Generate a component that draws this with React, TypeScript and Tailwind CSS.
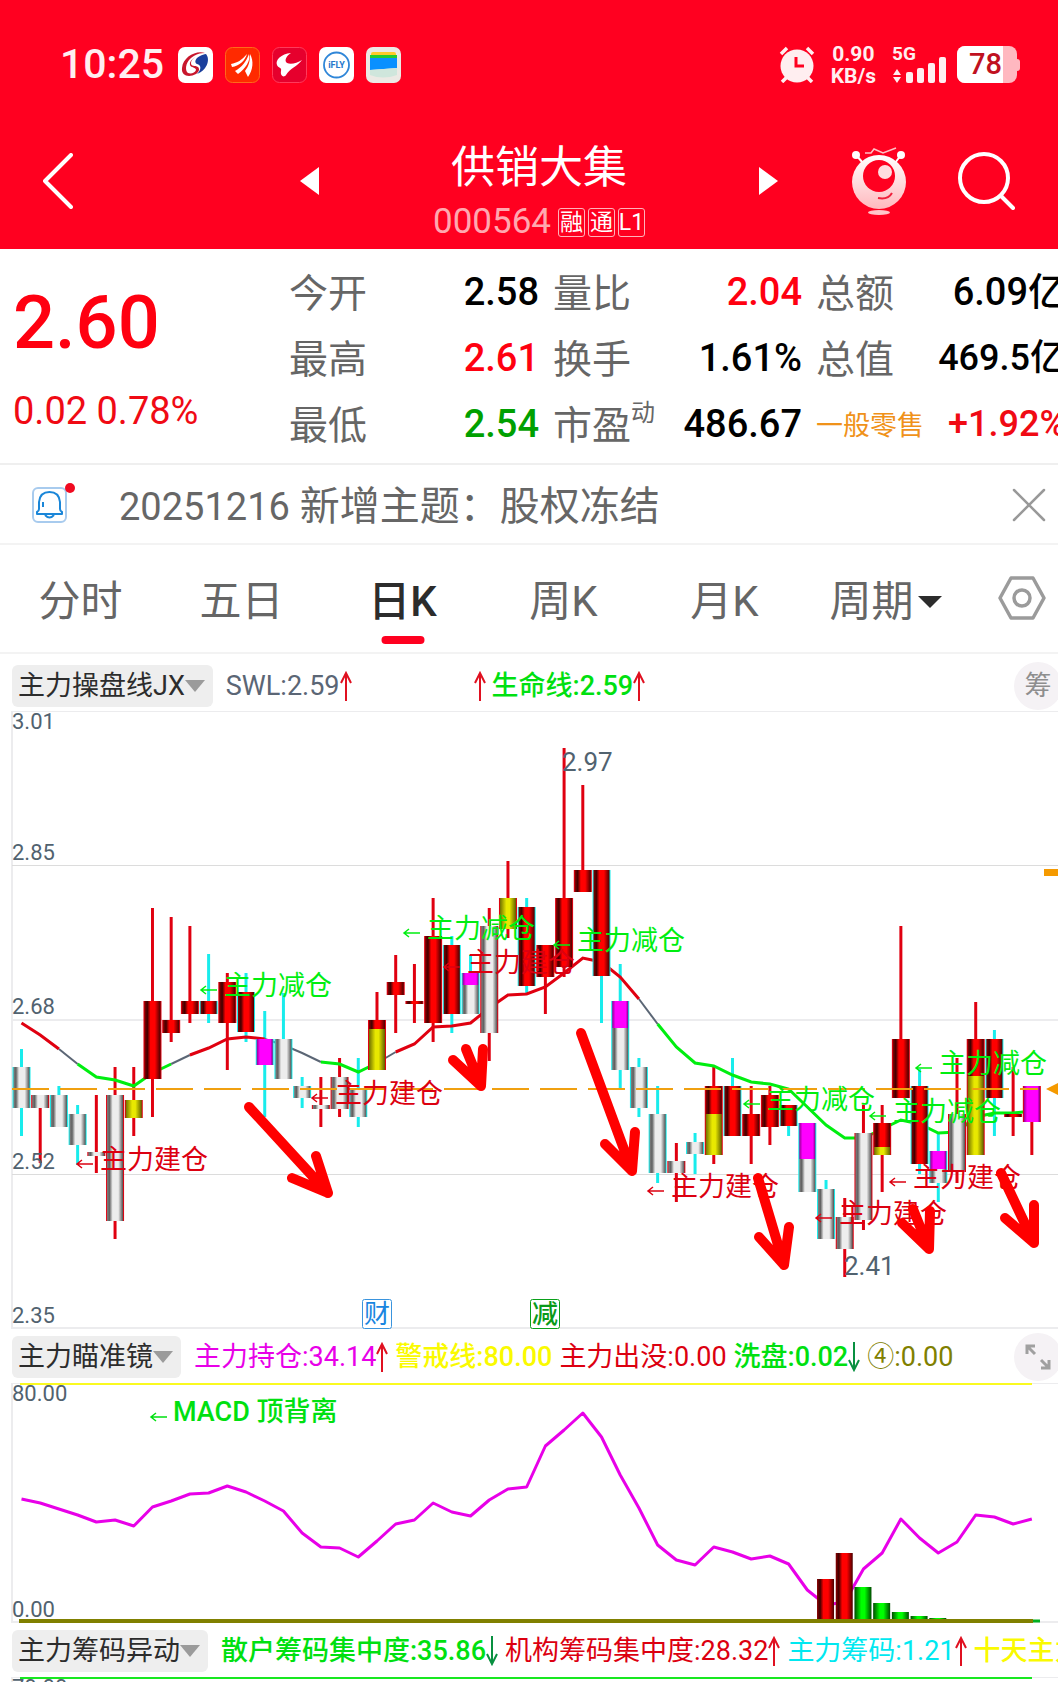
import type { ReactNode } from "react";
import { clsx } from "clsx";

type Fill = "red" | "silver" | "yellow" | "magenta" | "green";

interface Candle {
  wick: "up" | "down";
  fill: Fill;
  // high, body top, body bottom, low in plot units
  y: [number, number, number, number];
  // second colour that starts at `split` and runs down to the body bottom
  lower?: Fill;
  split?: number;
}

interface Readout {
  label: string;
  color: string;
  trend?: "up" | "down";
  lead?: "up";
  className?: string;
}

const STEP = 18.71;
const xAt = (i: number) => 21.5 + i * STEP;

const WICK_COLORS = { up: "#e00010", down: "#18ecec" };

const candles: Candle[] = [
  { wick: "down", fill: "silver", y: [338, 356, 397, 425] },
  { wick: "up", fill: "silver", y: [384, 384, 397, 452] },
  { wick: "down", fill: "silver", y: [375, 384, 416, 416] },
  { wick: "down", fill: "silver", y: [394, 403, 434, 454] },
  { wick: "up", fill: "silver", y: [384, 441, 445, 462] },
  { wick: "up", fill: "silver", y: [356, 384, 510, 528] },
  { wick: "up", fill: "yellow", y: [356, 389, 407, 425] },
  { wick: "up", fill: "red", y: [197, 290, 368, 406] },
  { wick: "up", fill: "red", y: [206, 309, 322, 331] },
  { wick: "up", fill: "red", y: [215, 290, 303, 312] },
  { wick: "down", fill: "red", y: [243, 290, 303, 312] },
  { wick: "up", fill: "red", y: [262, 271, 312, 359] },
  { wick: "down", fill: "red", y: [262, 281, 321, 331] },
  { wick: "down", fill: "magenta", y: [300, 328, 354, 406] },
  { wick: "down", fill: "silver", y: [282, 328, 368, 368] },
  { wick: "down", fill: "silver", y: [366, 375, 387, 397] },
  { wick: "up", fill: "silver", y: [366, 394, 398, 416] },
  { wick: "up", fill: "silver", y: [347, 366, 398, 406] },
  { wick: "down", fill: "silver", y: [347, 378, 406, 416] },
  { wick: "up", fill: "red", y: [281, 309, 359, 359], lower: "yellow", split: 318 },
  { wick: "up", fill: "red", y: [244, 271, 284, 322] },
  { wick: "up", fill: "red", y: [253, 290, 293, 312] },
  { wick: "up", fill: "red", y: [187, 225, 312, 331] },
  { wick: "down", fill: "red", y: [225, 234, 303, 322] },
  { wick: "down", fill: "magenta", y: [244, 262, 303, 303], lower: "silver", split: 274 },
  { wick: "up", fill: "silver", y: [197, 215, 322, 350] },
  { wick: "up", fill: "yellow", y: [150, 187, 218, 227] },
  { wick: "down", fill: "red", y: [187, 196, 275, 284] },
  { wick: "up", fill: "red", y: [234, 234, 266, 303] },
  { wick: "up", fill: "red", y: [37, 187, 256, 266] },
  { wick: "up", fill: "red", y: [74, 159, 181, 181] },
  { wick: "down", fill: "red", y: [159, 159, 265, 312] },
  { wick: "down", fill: "magenta", y: [253, 290, 359, 377], lower: "silver", split: 317 },
  { wick: "down", fill: "silver", y: [347, 356, 397, 406] },
  { wick: "down", fill: "silver", y: [375, 403, 462, 472] },
  { wick: "up", fill: "silver", y: [432, 450, 462, 491] },
  { wick: "down", fill: "silver", y: [422, 431, 443, 463] },
  { wick: "up", fill: "red", y: [356, 375, 444, 453], lower: "yellow", split: 403 },
  { wick: "down", fill: "red", y: [347, 375, 425, 425] },
  { wick: "up", fill: "red", y: [375, 403, 425, 453] },
  { wick: "up", fill: "red", y: [375, 384, 416, 434] },
  { wick: "down", fill: "red", y: [394, 394, 415, 425] },
  { wick: "down", fill: "magenta", y: [412, 412, 481, 481], lower: "silver", split: 448 },
  { wick: "down", fill: "silver", y: [469, 478, 528, 528] },
  { wick: "up", fill: "silver", y: [487, 506, 538, 566] },
  { wick: "up", fill: "silver", y: [394, 422, 509, 519] },
  { wick: "up", fill: "red", y: [394, 412, 444, 481], lower: "yellow", split: 436 },
  { wick: "up", fill: "red", y: [215, 328, 387, 387] },
  { wick: "down", fill: "red", y: [358, 375, 453, 463] },
  { wick: "down", fill: "magenta", y: [422, 440, 472, 491], lower: "silver", split: 458 },
  { wick: "up", fill: "silver", y: [347, 403, 461, 472] },
  { wick: "up", fill: "red", y: [291, 328, 444, 444], lower: "yellow", split: 365 },
  { wick: "down", fill: "red", y: [319, 328, 387, 425] },
  { wick: "up", fill: "red", y: [356, 403, 406, 425] },
  { wick: "up", fill: "magenta", y: [375, 375, 411, 444] },
];

const lifeLine = [
  312, 324, 338, 353, 366, 369, 375, 362, 353, 344, 337, 328, 326, 328, 334, 342, 351, 353, 361, 352,
  341, 333, 316, 315, 312, 297, 284, 283, 276, 262, 247, 251, 266, 288, 313, 336, 352, 355, 364, 371,
  373, 378, 396, 414, 427, 427, 418, 409, 413, 422, 421, 406, 402, 402, 400,
];

// [from, to, colour, width]
const lifeSegments: [number, number, string, number][] = [
  [0, 2, "#e00010", 3],
  [2, 3, "#5b6675", 2],
  [3, 8, "#00ee10", 3],
  [8, 9, "#5b6675", 2],
  [9, 13, "#e00010", 3],
  [13, 16, "#5b6675", 2],
  [16, 19, "#00ee10", 3],
  [19, 20, "#5b6675", 2],
  [20, 33, "#e00010", 3],
  [33, 34, "#5b6675", 2],
  [34, 54, "#00ee10", 3],
];

const signals = [
  { x: 201, y: 279, kind: "sell" },
  { x: 77, y: 453, kind: "buy" },
  { x: 312, y: 387, kind: "buy" },
  { x: 404, y: 222, kind: "sell" },
  { x: 444, y: 256, kind: "buy" },
  { x: 554, y: 234, kind: "sell" },
  { x: 648, y: 480, kind: "buy" },
  { x: 744, y: 393, kind: "sell" },
  { x: 870, y: 405, kind: "sell" },
  { x: 916, y: 357, kind: "sell" },
  { x: 890, y: 471, kind: "buy" },
  { x: 816, y: 507, kind: "buy" },
];

const handArrows = [
  "M249 396L328 482M316 445L328 482L292 467",
  "M466 338L481 375M453 349L481 375L483 338",
  "M581 322L632 460M635 421L632 460L605 433",
  "M758 467L784 554M789 516L784 554L759 526",
  "M913 498L929 538M930 500L929 538L902 512",
  "M1001 462L1034 532M1034 494L1034 532L1005 507",
];

const holdings = [
  116, 120, 126, 132, 139, 137, 143, 124, 118, 111, 110, 103, 109, 118, 128, 150, 164, 165, 174, 158,
  141, 137, 120, 129, 133, 117, 106, 104, 63, 47, 30, 54, 92, 125, 162, 177, 182, 164, 169, 176,
  173, 181, 207, 222, 219, 186, 170, 136, 155, 170, 159, 132, 134, 141, 136,
];

const volumeBars: { i: number; top: number; fill: Fill }[] = [
  { i: 43, top: 196, fill: "red" },
  { i: 44, top: 170, fill: "red" },
  { i: 45, top: 204, fill: "green" },
  { i: 46, top: 220, fill: "green" },
  { i: 47, top: 229, fill: "green" },
  { i: 48, top: 233, fill: "green" },
  { i: 49, top: 235, fill: "green" },
  { i: 50, top: 236, fill: "green" },
  { i: 51, top: 236, fill: "green" },
];

const tabs = ["分时", "五日", "日K", "周K", "月K"];

const points = (ys: number[], from = 0) => ys.map((y, k) => `${xAt(from + k)},${y}`).join(" ");

function Gradients() {
  return (
    <defs>
      <linearGradient id="fill-red">
        <stop offset="0" stopColor="#8a0000" />
        <stop offset="0.18" stopColor="#400000" />
        <stop offset="0.38" stopColor="#ff0000" />
        <stop offset="0.65" stopColor="#ff0000" />
        <stop offset="1" stopColor="#4a0000" />
      </linearGradient>
      <linearGradient id="fill-silver">
        <stop offset="0" stopColor="#808080" />
        <stop offset="0.15" stopColor="#606060" />
        <stop offset="0.35" stopColor="#ededed" />
        <stop offset="0.7" stopColor="#ededed" />
        <stop offset="1" stopColor="#505050" />
      </linearGradient>
      <linearGradient id="fill-yellow">
        <stop offset="0" stopColor="#707000" />
        <stop offset="0.4" stopColor="#e8e800" />
        <stop offset="0.6" stopColor="#e8e800" />
        <stop offset="1" stopColor="#606000" />
      </linearGradient>
      <linearGradient id="fill-magenta">
        <stop offset="0" stopColor="#900090" />
        <stop offset="0.2" stopColor="#ff00ff" />
        <stop offset="0.85" stopColor="#ff00ff" />
        <stop offset="1" stopColor="#800080" />
      </linearGradient>
      <linearGradient id="fill-green">
        <stop offset="0" stopColor="#004a00" />
        <stop offset="0.4" stopColor="#00ff00" />
        <stop offset="0.6" stopColor="#00ff00" />
        <stop offset="1" stopColor="#004a00" />
      </linearGradient>
    </defs>
  );
}

function CandleBody({ candle, index }: { candle: Candle; index: number }) {
  const x = xAt(index);
  const [, top, bottom] = candle.y;
  const end = candle.lower ? candle.split! : bottom;
  return (
    <g>
      <rect x={x - 9} y={top} width={18} height={bottom - top} fill={WICK_COLORS[candle.wick]} />
      <rect x={x - 8} y={top} width={16} height={end - top} fill={`url(#fill-${candle.fill})`} />
      {candle.lower && (
        <rect x={x - 8} y={end} width={16} height={bottom - end} fill={`url(#fill-${candle.lower})`} />
      )}
    </g>
  );
}

function LeftTick({ x, y, color }: { x: number; y: number; color: string }) {
  return <path d={`M${x + 16} ${y}H${x}M${x + 5} ${y - 4}L${x} ${y}L${x + 5} ${y + 4}`} stroke={color} strokeWidth="1.5" fill="none" />;
}

function PriceChart() {
  return (
    <svg viewBox="0 0 1058 618" className="block h-auto w-full" role="img" aria-label="日K">
      <Gradients />
      <path d="M12 0H1058M12 309H1058M12 617H1058M12 0V618" stroke="#ececee" strokeWidth="2" />
      <path d="M12 154.5H1058M12 463.5H1058" stroke="#dcdcdc" strokeWidth="1" />

      {candles.map((c, i) => (
        <line key={i} x1={xAt(i)} x2={xAt(i)} y1={c.y[0]} y2={c.y[3]} stroke={WICK_COLORS[c.wick]} strokeWidth="3" />
      ))}
      {lifeSegments.map(([from, to, color, width]) => (
        <polyline
          key={from}
          points={points(lifeLine.slice(from, to + 1), from)}
          fill="none"
          stroke={color}
          strokeWidth={width}
        />
      ))}
      {candles.map((c, i) => (
        <CandleBody key={i} candle={c} index={i} />
      ))}

      {/* last price */}
      <line x1="12" x2="1038" y1="378" y2="378" stroke="#f0a010" strokeWidth="2" strokeDasharray="37 11" />
      <path d="M1046 378L1058 372V384Z" fill="#f59a00" />
      <rect x="1044" y="158" width="14" height="7" fill="#f59a00" />

      {signals.map((s) => {
        const color = s.kind === "sell" ? "#00ee10" : "#dc0010";
        return (
          <g key={`${s.x}-${s.y}`}>
            <LeftTick x={s.x} y={s.y} color={color} />
            <text x={s.x + 23} y={s.y + 5} fontSize="27" fill={color}>
              {s.kind === "sell" ? "主力减仓" : "主力建仓"}
            </text>
          </g>
        );
      })}

      <g fontSize="22" fill="#51626f">
        <text x="12" y="18">3.01</text>
        <text x="12" y="149">2.85</text>
        <text x="12" y="303">2.68</text>
        <text x="12" y="458">2.52</text>
        <text x="12" y="612">2.35</text>
      </g>
      <g fontSize="26" fill="#51626f">
        <text x="562" y="60">2.97</text>
        <text x="844" y="564">2.41</text>
      </g>

      {handArrows.map((d) => (
        <path key={d} d={d} fill="none" stroke="#ff0000" strokeWidth="10" strokeLinecap="round" strokeLinejoin="round" />
      ))}

      <rect x="362.5" y="588.5" width="29" height="29" rx="2" fill="#fff" stroke="#3a94dd" />
      <text x="377" y="612" fontSize="26" textAnchor="middle" fill="#1a86e0">财</text>
      <rect x="530.5" y="588.5" width="29" height="29" rx="2" fill="#fff" stroke="#0aa01a" />
      <text x="545" y="612" fontSize="26" fontWeight="500" textAnchor="middle" fill="#0a9a1a">减</text>
    </svg>
  );
}

function HoldingChart() {
  return (
    <svg viewBox="0 0 1058 240" className="block h-auto w-full" role="img" aria-label="主力瞄准镜">
      <path d="M12 0H1058M12 239H1058M12 0V240" stroke="#ececee" strokeWidth="2" />
      <line x1="20" x2="1032" y1="1" y2="1" stroke="#fafa20" strokeWidth="2" />
      <polyline points={points(holdings)} fill="none" stroke="#e800e8" strokeWidth="3" strokeLinejoin="round" />
      {volumeBars.map((b) => (
        <rect key={b.i} x={xAt(b.i) - 9} y={b.top} width={17} height={238 - b.top} fill={`url(#fill-${b.fill})`} />
      ))}
      <line x1="19" x2="1033" y1="238" y2="238" stroke="#808000" strokeWidth="4" />
      <line x1="1033" x2="1040" y1="238" y2="238" stroke="#00b020" strokeWidth="3" />
      <LeftTick x={151} y={34} color="#00e010" />
      <text x="173" y="38" fontSize="27" fontWeight="500" fill="#00e010">MACD 顶背离</text>
      <g fontSize="22" fill="#51626f">
        <text x="12" y="18">80.00</text>
        <text x="12" y="234">0.00</text>
      </g>
    </svg>
  );
}

function TrendArrow({ dir }: { dir: "up" | "down" }) {
  return (
    <svg
      viewBox="0 0 12 30"
      className={clsx("h-[30px] w-3 shrink-0", dir === "up" ? "text-[#e01020]" : "rotate-180 text-[#089040]")}
      fill="none"
      stroke="currentColor"
      strokeWidth="2"
    >
      <path d="M6 30V2M1 12L6 2L11 12" />
    </svg>
  );
}

function IndicatorBar({ name, items, children, className }: { name: string; items: Readout[]; children?: ReactNode; className?: string }) {
  return (
    <div className={clsx("flex items-center overflow-hidden pb-1 pl-3 text-[27px] leading-[42px] whitespace-nowrap", className)}>
      <button type="button" className="flex shrink-0 items-center rounded-md bg-[#eeeeee] pr-2 pl-[6px] text-[#2c2c2c]">
        {name}
        <svg viewBox="0 0 20 12" className="h-3 w-5" fill="#9b9b9b">
          <path d="M0 0H20L10 12Z" />
        </svg>
      </button>
      <div className="ml-[13px] flex min-w-0 flex-1 gap-[7px]">
        {items.map((item) => (
          <span key={item.label} className={clsx("flex shrink-0 items-center", item.color, item.className)}>
            {item.lead && (
              <span className="mr-[6px]">
                <TrendArrow dir={item.lead} />
              </span>
            )}
            {item.label}
            {item.trend && <TrendArrow dir={item.trend} />}
          </span>
        ))}
      </div>
      {children}
    </div>
  );
}

interface StatProps {
  label: string;
  sup?: string;
  value: string;
  color?: string;
  size?: string;
  className?: string;
}

function Stat({ label, sup, value, color = "text-black", size = "text-[38px]", className }: StatProps) {
  return (
    <div className={clsx("flex h-[66px] items-center justify-between whitespace-nowrap", className)}>
      <dt className="flex items-start text-[39px] text-[#666666]">
        {label}
        {sup && <sup className="top-0 text-2xl leading-8">{sup}</sup>}
      </dt>
      <dd className={clsx("pb-1 font-medium", size, color)}>{value}</dd>
    </div>
  );
}

function StatusBar() {
  return (
    <div className="flex h-[37px] items-center justify-between pr-[38px] pl-[60px]">
      <div className="flex items-center">
        <span className="mr-[14px] text-[41px] leading-none font-medium text-[#ffeef0]">10:25</span>
        <div className="flex gap-3">
          <svg viewBox="0 0 35 36" className="h-9 w-[35px]">
            <rect width="35" height="36" rx="7" fill="#fff" />
            <path d="M27 6C18 3 5 10 4 21C3 29 11 31 18 27C21 25 22 22 20 20C17 18 13 20 13 16C13 11 21 7 27 6Z" fill="#c8162c" />
            <path d="M28 7C33 13 28 24 19 27C24 22 23 18 19 17C16 16 17 12 22 10C17 9 11 14 12 18C13 21 18 20 18 23C17 26 13 27 10 26C7 24 7 16 13 11C18 7 24 5 28 7Z" fill="#fff" />
            <path d="M28 7C33 13 28 24 19 27C24 22 23 18 19 17C16 16 17 11 22 9C24 8 26 7 28 7Z" fill="#1b3f9c" />
          </svg>
          <svg viewBox="0 0 35 36" className="h-9 w-[35px]">
            <rect x="0.5" y="0.5" width="34" height="35" rx="7" fill="#ff2a00" stroke="#ff6a1a" />
            <path d="M6 17C12 16 17 13 22 7C20 14 14 19 7 20ZM10 24C17 20 21 15 24 7C26 14 20 22 13 27ZM20 24C24 19 25 14 25 7C29 14 28 23 23 30Z" fill="#fff" />
          </svg>
          <svg viewBox="0 0 35 36" className="h-9 w-[35px]">
            <rect x="0.5" y="0.5" width="34" height="35" rx="7" fill="#e6002d" stroke="#ff3b5c" />
            <path d="M19 6C9 7 3 13 5 18C6 21 10 20 9 24C8 29 12 31 14 28C18 21 25 20 30 13C25 16 19 18 15 16C12 14 14 9 19 6Z" fill="#fff" />
          </svg>
          <svg viewBox="0 0 35 36" className="h-9 w-[35px]">
            <rect width="35" height="36" rx="7" fill="#fff" />
            <circle cx="17.5" cy="18" r="12.5" fill="none" stroke="#2f86d8" strokeWidth="1.8" />
            <text x="17.5" y="21" fontSize="9" fontWeight="700" textAnchor="middle" fill="#2478cc">iFLY</text>
          </svg>
          <svg viewBox="0 0 35 36" className="h-9 w-[35px]">
            <rect width="35" height="36" rx="7" fill="#ece9e4" />
            <rect x="5" y="5" width="25" height="10" rx="2" fill="#ffc928" />
            <rect x="4" y="8" width="27" height="10" fill="#22cc2e" />
            <path d="M4 11H31V21L18 22L4 23Z" fill="#0a90ff" />
            <path d="M4 23L31 21V28Q17 33 4 28Z" fill="#cfe6dc" />
          </svg>
        </div>
      </div>

      <div className="flex items-center text-[#ffeef0]">
        <svg viewBox="0 0 36 37" className="h-[37px] w-9" fill="none" stroke="currentColor">
          <circle cx="18" cy="20" r="16.5" fill="currentColor" stroke="none" />
          <path d="M2 8L8 2M28 2L34 8" strokeWidth="3.5" />
          <path d="M8 31L3 36M28 31L33 36" strokeWidth="3.5" />
          <path d="M17 11V20H25" stroke="#ff0020" strokeWidth="3" />
        </svg>
        <div className="ml-4 text-center text-[21px] leading-[22px] font-bold">
          <div>0.90</div>
          <div>KB/s</div>
        </div>
        <svg viewBox="0 0 55 37" className="ml-4 h-[37px] w-[55px]" fill="currentColor">
          <text x="0" y="14" fontSize="19" fontWeight="700">5G</text>
          <path d="M1 29L5 23L9 29ZM1 31L5 37L9 31Z" />
          <rect x="14" y="26" width="7" height="11" rx="2" />
          <rect x="25" y="22" width="7" height="15" rx="2" />
          <rect x="36" y="17" width="7" height="20" rx="2" />
          <rect x="47" y="11" width="7" height="26" rx="2" />
        </svg>
        <div className="ml-[10px] flex items-center">
          <div className="flex h-[37px] w-[60px] overflow-hidden rounded-lg bg-[#ffb8c0]">
            <div className="w-[46px] bg-white pr-px text-right text-[29px] leading-[37px] font-medium text-[#c01020]">78</div>
          </div>
          <div className="h-3 w-[3px] rounded-r-sm bg-[#ffb8c0]" />
        </div>
      </div>
    </div>
  );
}

function TitleBar() {
  return (
    <div className="mt-[31px] flex h-[135px] items-center px-[43px] pb-px text-white">
      <button type="button" aria-label="返回">
        <svg viewBox="0 0 30 56" className="h-14 w-[30px]" fill="none" stroke="currentColor" strokeWidth="4" strokeLinecap="round" strokeLinejoin="round">
          <path d="M28 2L2 28L28 54" />
        </svg>
      </button>
      <div className="ml-auto flex w-[478px] items-center justify-between">
        <button type="button" aria-label="上一只">
          <svg viewBox="0 0 19 28" className="h-7 w-[19px]" fill="currentColor">
            <path d="M19 0V28L0 14Z" />
          </svg>
        </button>
        <div className="mt-6 flex flex-col items-center">
          <h1 className="text-[44px] leading-[58px]">供销大集</h1>
          <div className="flex h-[50px] items-center gap-[3px]">
            <span className="mr-1 text-[35px] text-[#ffa8b0]">000564</span>
            {["融", "通", "L1"].map((tag) => (
              <span key={tag} className="flex h-[29px] w-[27px] items-center justify-center rounded-[3px] border border-[#ffb3bb] text-[23px] leading-none">
                {tag}
              </span>
            ))}
          </div>
        </div>
        <button type="button" aria-label="下一只">
          <svg viewBox="0 0 19 28" className="h-7 w-[19px]" fill="currentColor">
            <path d="M0 0V28L19 14Z" />
          </svg>
        </button>
      </div>
      <button type="button" aria-label="助手" className="ml-[73px]">
        <svg viewBox="0 0 56 68" className="h-[68px] w-14">
          <defs>
            <linearGradient id="robot" x2="0" y2="1">
              <stop offset="0" stopColor="#fff" />
              <stop offset="1" stopColor="#ffb9be" />
            </linearGradient>
          </defs>
          <path d="M14 6L20 6L23 2L32 6L45 1" fill="none" stroke="#ffc0c5" strokeWidth="1.5" />
          <path d="M5 8L12 16M50 8L44 16" stroke="#fff" strokeWidth="2" />
          <circle cx="5" cy="8" r="4" fill="#fff" />
          <circle cx="50" cy="8" r="4" fill="#fff" />
          <circle cx="28" cy="35" r="27" fill="url(#robot)" />
          <circle cx="28" cy="29" r="16" fill="#ff0020" />
          <circle cx="34" cy="25" r="7" fill="#ffdde0" />
          <path d="M27 51Q37 53 41 46" fill="none" stroke="#f0203c" strokeWidth="2" />
          <ellipse cx="28" cy="65.5" rx="11" ry="2.5" fill="#ffc5c9" />
        </svg>
      </button>
      <button type="button" aria-label="搜索" className="ml-[51px]">
        <svg viewBox="0 0 57 58" className="h-[58px] w-[57px]" fill="none" stroke="currentColor" strokeWidth="4" strokeLinecap="round">
          <circle cx="26" cy="26" r="24" />
          <path d="M43 44L55 56" />
        </svg>
      </button>
    </div>
  );
}

export default function App() {
  return (
    <div className="h-screen overflow-hidden bg-white [font-family:Roboto,'Noto_Sans_CJK_SC',sans-serif]">
      <header className="bg-[#ff0020] pt-[46px]">
        <StatusBar />
        <TitleBar />
      </header>

      <section className="grid grid-cols-[275fr_250fr_249fr_242fr] gap-x-[14px] border-b-2 border-[#efefef] pt-3 pb-1">
        <div className="pl-[13px] whitespace-nowrap text-[#f00a14]">
          <div className="mt-6 text-[74px] leading-[76px] font-medium text-[#ff0010]">2.60</div>
          <div className="mt-7 text-[38px] leading-[44px]">0.02 0.78%</div>
        </div>
        <dl>
          <Stat label="今开" value="2.58" />
          <Stat label="最高" value="2.61" color="text-[#ff0010]" />
          <Stat label="最低" value="2.54" color="text-[#00a000]" />
        </dl>
        <dl>
          <Stat label="量比" value="2.04" color="text-[#ff0010]" />
          <Stat label="换手" value="1.61%" />
          <Stat label="市盈" sup="动" value="486.67" />
        </dl>
        <dl className="overflow-hidden">
          <Stat label="总额" value="6.09亿" className="-mr-2" />
          <Stat label="总值" value="469.5亿" size="text-[36px]" className="-mr-2" />
          <div className="-mr-2 flex h-[66px] items-center justify-between whitespace-nowrap">
            <dt className="text-[27px] text-[#f0921a]">一般零售</dt>
            <dd className="pb-1 text-[36px] font-medium text-[#f00a14]">+1.92%</dd>
          </div>
        </dl>
      </section>

      <section className="flex h-[80px] items-center border-b-2 border-[#f3f3f3] pt-[2px] pr-3 pl-8">
        <div className="relative">
          <svg viewBox="0 0 35 36" className="h-9 w-[35px]" fill="none" stroke="#1a86d8" strokeWidth="2">
            <rect x="1" y="1" width="33" height="34" rx="5" stroke="#a8cbee" />
            <path d="M7 22V15Q8 5 17.500 5Q27 5 28 15V22Q28 24 30 25V27H5V25Q7 24 7 22Z" strokeLinejoin="round" />
            <path d="M13 28Q17.500 33 22 28M11 15V20" />
          </svg>
          <span className="absolute -top-1 -right-2 size-[10px] rounded-full bg-[#f00a20]" />
        </div>
        <p className="ml-[52px] flex-1 pt-1 text-[40px] whitespace-nowrap text-[#666666]">
          <span className="text-[38px]">20251216</span> 新增主题：股权冻结
        </p>
        <button type="button" aria-label="关闭">
          <svg viewBox="0 0 34 34" className="size-[34px]" stroke="#999" strokeWidth="2.5" strokeLinecap="round">
            <path d="M2 2L32 32M32 2L2 32" />
          </svg>
        </button>
      </section>

      <nav className="flex h-[109px] border-b-2 border-[#f3f3f3] pt-[7px] text-[42px] leading-[100px] text-[#666666]">
        {tabs.map((tab) => {
          const active = tab === "日K";
          return (
            <button
              key={tab}
              type="button"
              className={clsx("relative flex-[161]", active && "font-medium text-[#2c2c2c]")}
            >
              {tab}
              {active && <span className="absolute bottom-2 left-1/2 h-2 w-[43px] -translate-x-1/2 rounded-full bg-[#ff0020]" />}
            </button>
          );
        })}
        <button type="button" className="flex flex-[161] items-center justify-center gap-1">
          周期
          <svg viewBox="0 0 24 12" className="h-3 w-6" fill="#2c2c2c">
            <path d="M0 0H24L12 12Z" />
          </svg>
        </button>
        <button type="button" aria-label="设置" className="flex flex-[72] items-center justify-center pb-2 pl-5">
          <svg viewBox="0 0 48 44" className="h-11 w-12 shrink-0" fill="none" stroke="#9b9b9b" strokeWidth="3.5" strokeLinejoin="round">
            <path d="M13 2H35L46 22L35 42H13L2 22Z" />
            <circle cx="24" cy="22" r="8" />
          </svg>
        </button>
      </nav>

      <IndicatorBar
        name="主力操盘线JX"
        className="h-[57px] pt-[10px]"
        items={[
          { label: "SWL:2.59", color: "text-[#5b6675]", trend: "up" },
          { label: "生命线:2.59", color: "text-[#00e010] font-medium", lead: "up", trend: "up", className: "ml-[115px]" },
        ]}
      >
        <button type="button" className="-mr-1 size-12 shrink-0 rounded-full bg-[#f5f2f5] text-[27px] leading-[48px] text-[#8e8e8e]">筹</button>
      </IndicatorBar>
      <PriceChart />

      <IndicatorBar
        name="主力瞄准镜"
        className="h-[54px] pt-[6px]"
        items={[
          { label: "主力持仓:34.14", color: "text-[#e800e8]", trend: "up" },
          { label: "警戒线:80.00", color: "text-[#fafa00] font-medium" },
          { label: "主力出没:0.00", color: "text-[#dc0010]" },
          { label: "洗盘:0.02", color: "text-[#00e010] font-medium", trend: "down" },
          { label: "④:0.00", color: "text-[#808000]" },
        ]}
      >
        <button type="button" aria-label="展开" className="-mr-1 flex size-12 shrink-0 items-center justify-center rounded-full bg-[#f5f2f5]">
          <svg viewBox="0 0 26 26" className="size-[26px]" fill="none" stroke="#a0a0a0" strokeWidth="3">
            <path d="M2 10V2H10M2 2L10 10M24 16V24H16M24 24L16 16" />
          </svg>
        </button>
      </IndicatorBar>
      <HoldingChart />

      <IndicatorBar
        name="主力筹码异动"
        className="h-[54px] pt-[6px]"
        items={[
          { label: "散户筹码集中度:35.86", color: "text-[#00e010] font-medium", trend: "down" },
          { label: "机构筹码集中度:28.32", color: "text-[#dc0010]", trend: "up" },
          { label: "主力筹码:1.21", color: "text-[#00e8f0]", trend: "up" },
          { label: "十天主力", color: "text-[#fafa00] font-medium" },
        ]}
      />
      <svg viewBox="0 0 1058 240" className="block h-auto w-full" role="img" aria-label="主力筹码异动">
        <path d="M12 0H1058M12 0V240" stroke="#ececee" strokeWidth="2" />
        <line x1="20" x2="1032" y1="1" y2="1" stroke="#18e820" strokeWidth="2" />
        <text x="12" y="18" fontSize="22" fill="#51626f">70.00</text>
      </svg>
    </div>
  );
}
